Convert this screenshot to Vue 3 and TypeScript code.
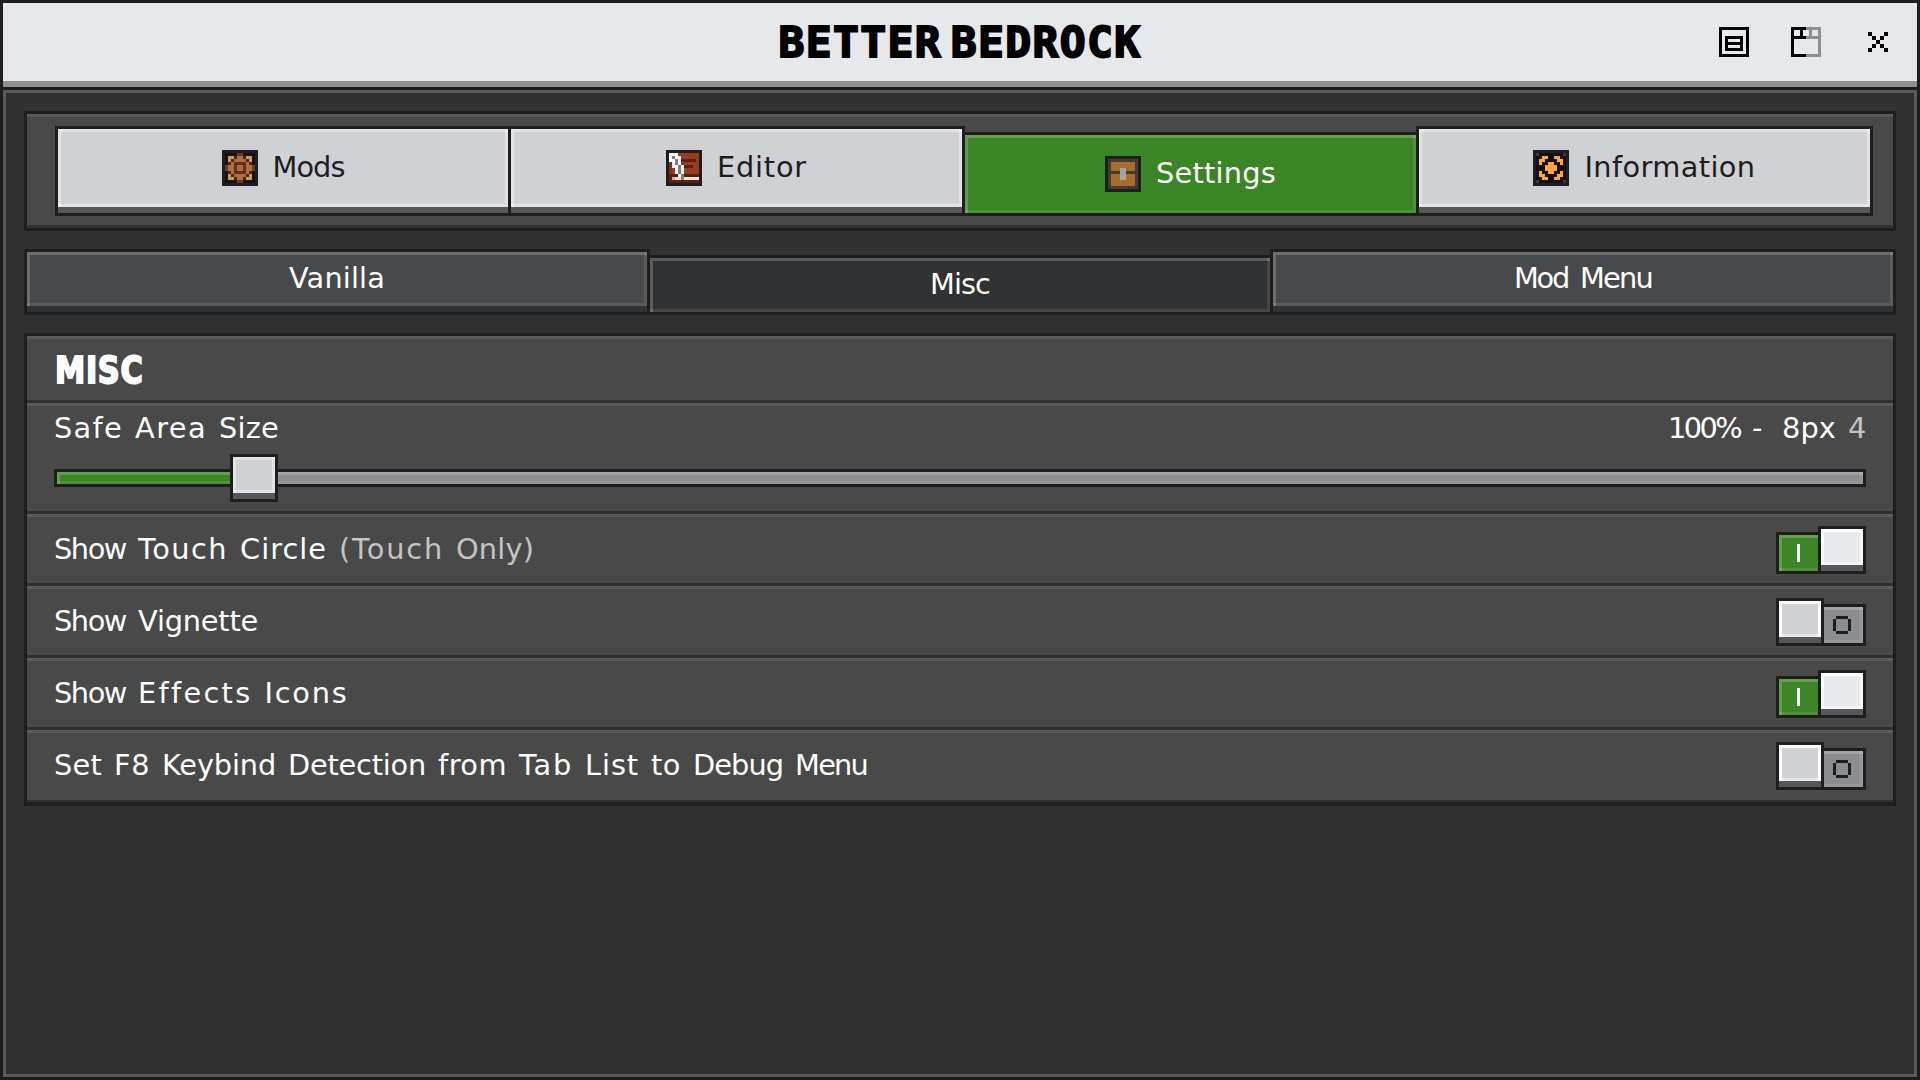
<script setup lang="ts">
import { h, ref } from 'vue'
import type { FunctionalComponent } from 'vue'

const UNIT = 3
const FACE = '28.8px "DejaVu Sans"'
const advances: Record<string, number> = { i: 2, l: 3, t: 4, f: 5, I: 4, ' ': 4, '(': 5, ')': 5, k: 5 }
const pen = document.createElement('canvas').getContext('2d')!

function spacing(token: string): string {
  pen.font = FACE
  const wanted = [...token].reduce((sum, ch) => sum + (advances[ch] ?? 6) * UNIT, 0)
  return ((wanted - pen.measureText(token).width) / token.length).toFixed(3) + 'px'
}

// Sets every word on the 3px advance grid of the interface lettering.
const GridText: FunctionalComponent<{ text: string }> = (props) =>
  h('span', props.text.split(/( )/).filter(Boolean).map((token) =>
    h('span', { style: { letterSpacing: spacing(token) } }, token)))
GridText.props = ['text']

interface Sprite { colors: Record<string, string>; rows: string[] }

const sprites: Record<string, Sprite> = {
  mods: {
    colors: { k: '#17130b', r: '#74371e', g: '#c79c60', d: '#4b2710', o: '#b46c3e', b: '#5f3318' },
    rows: ['kkkkrrkkkk', 'kggdoodggk', 'kgdoooodgk', 'kdobbbbodk', 'roobooboor', 'roobooboor', 'kdobbbbodk', 'kgdoooodgk', 'kggdoodggk', 'kkkkrrkkkk'],
  },
  editor: {
    colors: { w: '#ffffff', s: '#7f7f7f', r: '#983d25', e: '#84301a', d: '#5e1f0f', p: '#ffe6cb', q: '#d9a983' },
    rows: ['wwwrrrrrrr', 'wswwrrrrrr', 'wwswdddddr', 'ewswrrrrrr', 'ewwswdddrr', 'erwswrrrrr', 'erwswrrrrr', 'dddwsddddd', 'dqppsppppp', 'dddddddddd'],
  },
  settings: {
    colors: { f: '#463b30', o: '#a86e29', s: '#a5a5a5' },
    rows: ['ffffffffff', 'foooooooof', 'foooooooof', 'fooossooof', 'ffffssffff', 'fooossooof', 'fooossooof', 'foooooooof', 'foooooooof', 'ffffffffff'],
  },
  info: {
    colors: { k: '#120d0a', c: '#473930', o: '#ffa43f' },
    rows: ['ckkkkkkkkc', 'kkookkookk', 'kookkkkook', 'kokkookkok', 'kkkooookkk', 'kkkooookkk', 'kokkookkok', 'kookkkkook', 'kkookkookk', 'ckkkkkkkkc'],
  },
}

const pixels = (s: Sprite) =>
  s.rows.flatMap((row, y) => [...row].map((c, x) => ({ x: x + 1, y: y + 1, fill: s.colors[c] })))

const sections = [
  { id: 'mods', label: 'Mods' },
  { id: 'editor', label: 'Editor' },
  { id: 'settings', label: 'Settings' },
  { id: 'info', label: 'Information' },
]
const section = ref('settings')

const tabs = ['Vanilla', 'Misc', 'Mod Menu']
const tab = ref('Misc')

const options = ref([
  { label: 'Show Touch Circle', note: '(Touch Only)', on: true },
  { label: 'Show Vignette', note: '', on: false },
  { label: 'Show Effects Icons', note: '', on: true },
  { label: 'Set F8 Keybind Detection from Tab List to Debug Menu', note: '', on: false },
])
</script>

<template>
  <div class="window">
    <header class="titlebar">
      <h1 class="title">BETTER BEDROCK</h1>
      <div class="controls">
        <svg width="30" height="30" viewBox="0 0 10 10" shape-rendering="crispEdges">
          <path fill="#000" fill-rule="evenodd" d="M0 0H10V10H0ZM1 1V9H9V1ZM2 3H8V8H2ZM3 4V5H7V4ZM3 6V7H7V6Z" />
        </svg>
        <svg width="30" height="30" viewBox="0 0 30 30" shape-rendering="crispEdges">
          <path fill="#000" d="M0 0H15V3H12V9H15V12H3V27H15V30H0ZM3 3V9H9V3Z" />
          <path fill="#8f8f8f" d="M15 0H30V30H15V27H27V12H15V9H18V3H15ZM21 3V9H27V3Z" />
        </svg>
        <svg class="close" width="20" height="20" viewBox="0 0 5 5" shape-rendering="crispEdges">
          <path fill="#000" d="M0 0h1v1h1v1h1v-1h1v-1h1v1h-1v1h-1v1h1v1h1v1h-1v-1h-1v-1h-1v1h-1v1h-1v-1h1v-1h1v-1h-1v-1h-1z" />
        </svg>
      </div>
    </header>

    <main class="body">
      <nav class="sections">
        <button
          v-for="s in sections"
          :key="s.id"
          class="section"
          :class="{ active: section === s.id }"
          @click="section = s.id"
        >
          <span class="face">
            <svg width="36" height="36" viewBox="0 0 12 12" shape-rendering="crispEdges">
              <rect width="12" height="12" fill="#1e1e1f" />
              <rect v-for="(p, i) in pixels(sprites[s.id])" :key="i" :x="p.x" :y="p.y" width="1" height="1" :fill="p.fill" />
            </svg>
            <GridText class="text" :text="s.label" />
          </span>
        </button>
      </nav>

      <nav class="tabs">
        <button v-for="t in tabs" :key="t" class="tab" :class="{ active: tab === t }" @click="tab = t">
          <span class="face"><GridText class="text" :text="t" /></span>
        </button>
      </nav>

      <section class="panel">
        <div class="row heading"><h2>MISC</h2></div>
        <div class="row range">
          <div class="range-head">
            <GridText class="text" text="Safe Area Size" />
            <span class="value"><GridText class="text" text="100% - 8px " /><GridText class="text muted" text="4" /></span>
          </div>
          <div class="slider">
            <div class="filled"></div>
            <div class="thumb"><div class="thumb-face"></div></div>
            <div class="rest"></div>
          </div>
        </div>
        <div v-for="o in options" :key="o.label" class="row option">
          <span>
            <GridText class="text" :text="o.label" />
            <GridText v-if="o.note" class="text muted" :text="' ' + o.note" />
          </span>
          <button class="toggle" :class="{ on: o.on }" @click="o.on = !o.on">
            <span class="track">
              <svg v-if="o.on" width="3" height="18"><rect width="3" height="18" fill="#fff" /></svg>
              <svg v-else width="18" height="18" viewBox="0 0 6 6" shape-rendering="crispEdges">
                <path fill="#1e1e1f" d="M1 0H5V1H1ZM0 1H1V5H0ZM5 1H6V5H5ZM1 5H5V6H1Z" />
              </svg>
            </span>
            <span class="knob"><span class="knob-face"></span></span>
          </button>
        </div>
      </section>
    </main>
  </div>
</template>

<style>
body {
  background: #1e1e1f;
  overflow: hidden;
}
</style>

<style scoped>
* {
  box-sizing: border-box;
}

button {
  margin: 0;
  padding: 0;
  border: 0;
  background: none;
  cursor: pointer;
}

svg {
  display: block;
  flex: none;
}

.window {
  display: flex;
  flex-direction: column;
  width: 1920px;
  height: 1080px;
  padding: 3px;
  background: #1e1e1f;
}

.titlebar {
  display: flex;
  align-items: center;
  justify-content: center;
  position: relative;
  height: 84px;
  flex: none;
  border-bottom: 6px solid #8f8f8f;
  background: #e6e8eb;
}

.title {
  margin: 0;
  color: #000;
  font: bold 43px/50px 'DejaVu Sans Mono', monospace;
  letter-spacing: 1.35px;
  word-spacing: -18.5px;
  white-space: nowrap;
  -webkit-text-stroke: 2px #000;
}

.controls {
  display: flex;
  align-items: center;
  gap: 42px;
  position: absolute;
  right: 29px;
  top: 24px;
}

.close {
  margin-left: 5px;
}

.body {
  flex: 1;
  display: flex;
  flex-direction: column;
  gap: 18px;
  margin-top: 3px;
  padding: 18px;
  border: 3px solid #5a5a5b;
  background: #313131;
}

.text {
  color: #fff;
  font: 28.8px/36px 'DejaVu Sans', sans-serif;
  white-space: pre;
}

.muted {
  color: #c3c3c3;
}

.sections {
  display: flex;
  height: 120px;
  flex: none;
  padding: 9px 20px 9px 28px;
  border: 3px solid #1e1e1f;
  background: #494949;
  box-shadow: inset 0 3px #5a5a5b, inset 0 -3px #313131;
  padding-top: 12px;
}

.section {
  width: 457px;
  height: 90px;
  flex: none;
  margin-left: -3px;
  padding-bottom: 6px;
  border: 3px solid #1e1e1f;
  background: #58585a;
}

.section:first-child {
  width: 456px;
  margin-left: 0;
}

.face {
  display: flex;
  align-items: center;
  justify-content: center;
  gap: 15px;
  height: 100%;
}

.face .text {
  padding-bottom: 3px;
}

.section .face {
  background: #d0d1d4;
  box-shadow: inset 3px 3px rgba(255, 255, 255, 0.4), inset -3px -3px rgba(255, 255, 255, 0.4);
}

.section .text {
  color: #1e1e1f;
}

.section.active {
  height: 84px;
  margin-top: 6px;
  padding-bottom: 0;
}

.section.active .face {
  background: #3c8527;
  box-shadow: inset 3px 3px rgba(255, 255, 255, 0.2), inset -3px -3px rgba(255, 255, 255, 0.1);
}

.section.active .text {
  color: #fff;
}

.tabs {
  display: flex;
  height: 66px;
  flex: none;
}

.tab {
  width: 626px;
  flex: none;
  margin-left: -3px;
  padding-bottom: 6px;
  border: 3px solid #1e1e1f;
  background: #313233;
}

.tab:first-child {
  margin-left: 0;
}

.tab .face {
  background: #48494a;
  box-shadow: inset 3px 3px rgba(255, 255, 255, 0.2), inset -3px -3px rgba(255, 255, 255, 0.1);
}

.tab.active {
  margin-top: 6px;
  padding-bottom: 0;
}

.tab.active .face {
  background: #313233;
}

.panel {
  flex: none;
  border: 3px solid #1e1e1f;
  border-bottom-width: 4px;
}

.row {
  height: 72px;
  padding: 0 27px;
  border-top: 3px solid #5a5a5b;
  border-bottom: 3px solid #313131;
  background: #494949;
}

.row:last-child {
  border-bottom-width: 2px;
}

.heading {
  display: flex;
  align-items: center;
  height: 67px;
}

.heading h2 {
  margin: 0 0 0 1px;
  color: #fff;
  font: bold 38px/50px 'DejaVu Sans', sans-serif;
  letter-spacing: 0.8px;
  transform: scaleX(0.8);
  transform-origin: left;
  -webkit-text-stroke: 2px #fff;
}

.range {
  height: 111px;
}

.range-head {
  display: flex;
  justify-content: space-between;
  height: 36px;
  margin-top: 4px;
}

.value {
  display: flex;
}

.slider {
  display: flex;
  align-items: center;
  height: 48px;
  margin-top: 8px;
}

.filled,
.rest {
  height: 18px;
  border: 3px solid #1e1e1f;
}

.filled {
  width: 176px;
  border-right: 0;
  background: #3c8527;
  box-shadow: inset 3px 3px rgba(255, 255, 255, 0.2), inset 0 -3px rgba(255, 255, 255, 0.1);
}

.rest {
  flex: 1;
  border-left: 0;
  background: #8c8d90;
  box-shadow: inset 0 3px rgba(255, 255, 255, 0.2), inset -3px -3px rgba(255, 255, 255, 0.1);
}

.thumb {
  width: 48px;
  height: 48px;
  padding-bottom: 6px;
  border: 3px solid #1e1e1f;
  background: #58585a;
}

.thumb-face {
  height: 36px;
  background: #d0d1d4;
  box-shadow: inset 3px 3px rgba(255, 255, 255, 0.4), inset -3px -3px rgba(255, 255, 255, 0.4);
}

.option {
  display: flex;
  justify-content: space-between;
  white-space: nowrap;
  align-items: flex-start;
  padding-top: 7px;
}

.option > span {
  display: flex;
  margin-top: 7px;
}

.toggle {
  display: flex;
  flex-direction: row-reverse;
  align-items: flex-end;
  width: 90px;
  height: 48px;
  margin-top: 2px;
}

.toggle.on {
  flex-direction: row;
}

.track {
  display: flex;
  align-items: center;
  justify-content: center;
  width: 42px;
  height: 42px;
  padding-right: 3px;
  border: 3px solid #1e1e1f;
  border-left: 0;
  background: #8c8d90;
  box-shadow: inset 0 3px rgba(255, 255, 255, 0.2), inset -3px -3px rgba(255, 255, 255, 0.1);
}

.on .track {
  padding-right: 0;
  border-left: 3px solid #1e1e1f;
  border-right: 0;
  background: #3c8527;
  box-shadow: inset 3px 3px rgba(255, 255, 255, 0.2), inset 0 -3px rgba(255, 255, 255, 0.1);
}

.knob {
  width: 48px;
  height: 48px;
  border: 3px solid #1e1e1f;
  background: #58585a;
}

.knob-face {
  display: block;
  height: 36px;
  background: #d0d1d4;
  box-shadow: inset 3px 0 #fff, inset -3px 0 #fff, inset 0 3px #fff, inset 0 -3px #e8e8ea;
}

.on .knob-face {
  background: #e6e8eb;
  box-shadow: inset 3px 3px #fff, inset -3px -3px #f5f6f7;
}
</style>
